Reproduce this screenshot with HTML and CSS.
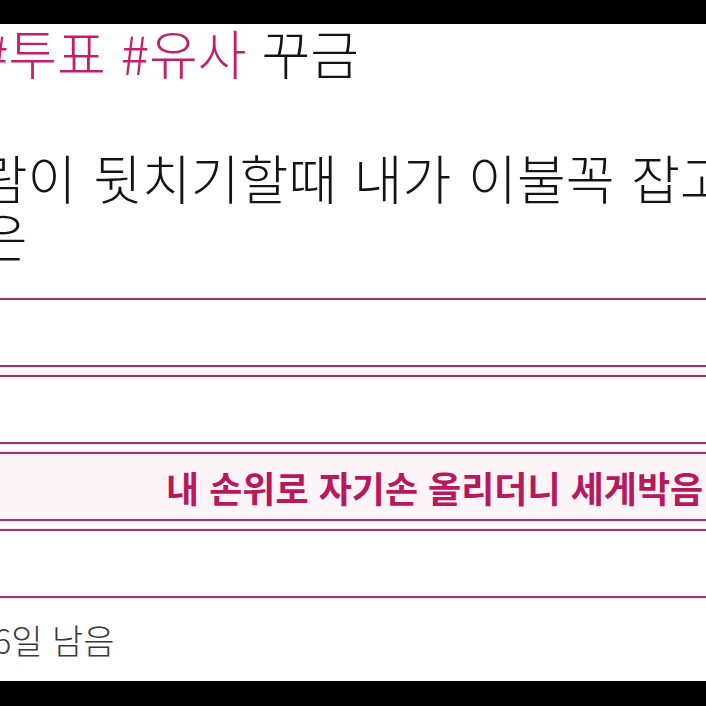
FILE: index.html
```html
<!DOCTYPE html>
<html lang="ko">
<head>
  <meta charset="UTF-8">
  <title>투표</title>
  <link rel="stylesheet" href="styles.css">
</head>
<body>
  <div class="frame">
    <div class="bar"></div>

    <div class="screen">
      <div class="tweet">
        <p class="tags"><span class="tag">#투표 #유사</span> 꾸금</p>
        <p class="body-line">사람이 뒷치기할때 내가 이불꼭 잡고 있으면</p>
        <p class="body-line">좋은</p>
      </div>

      <div class="poll">
        <div class="option"></div>
        <div class="option"></div>
        <div class="option picked"><span class="label">내 손위로 자기손 올리더니 세게박음</span></div>
        <div class="option"></div>
      </div>

      <p class="remain">6일 남음</p>
    </div>

    <div class="bar bottom"></div>
  </div>
</body>
</html>
```

FILE: styles.css
```css
*{
  margin: 0;
  padding: 0;
  box-sizing: border-box;
}

body{
  width: 706px;
  height: 706px;
  overflow: hidden;
  background: #000;
  font-family: "Noto Sans CJK KR", "Noto Sans", sans-serif;
}

.frame{
  display: flex;
  flex-direction: column;
  height: 706px;
}

.bar{
  height: 24px;
  background: #000;
}
.bar.bottom{
  height: 25px;
}

.screen{
  height: 657px;
  background: #fff;
  overflow: hidden;
  white-space: nowrap;
}

/* tweet text, cropped at the left edge */
.tweet{
  margin-left: -70px;
  color: #141414;
  font-size: 53px;
  font-weight: 300;
}

.tags{
  margin-top: -2px;
  line-height: 60px;
  padding-left: 50px;
}
.tag{
  color: #c41e6a;
}

.body-line{
  line-height: 58px;
  word-spacing: 2px;
}
.tags + .body-line{
  margin-top: 66px;
}

/* poll options run past both edges */
.poll{
  display: flex;
  flex-direction: column;
  gap: 8px;
  margin: 34px -40px 0;
}

.option{
  display: flex;
  align-items: center;
  height: 69px;
  border: 2px solid #a3326f;
  border-radius: 8px;
  box-shadow: 0 0 2px #f3a9cf;
}

.option.picked{
  background: #fdf4f8;
}

.label{
  padding-left: 204px;
  color: #b8195c;
  font-size: 36px;
  font-weight: 700;
}

.remain{
  margin-top: 22px;
  margin-left: -7px;
  color: #3a3a3a;
  font-size: 34px;
  line-height: 40px;
  font-weight: 300;
}
```
